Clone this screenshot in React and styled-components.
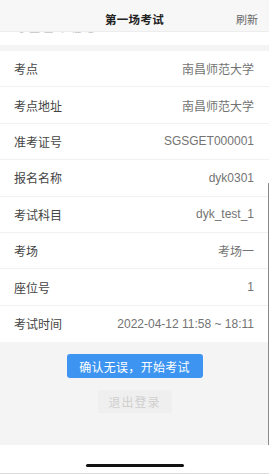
import React from "react";
import styled, { createGlobalStyle } from "styled-components";

const Global = createGlobalStyle`
  html, body { margin: 0; padding: 0; background: #ffffff; }
  body { font-family: "Liberation Sans", "Noto Sans CJK SC", sans-serif; }
  * { box-sizing: border-box; }
`;

const Page = styled.div`
  position: relative;
  width: 269px;
  height: 474px;
  display: flex;
  flex-direction: column;
  background: #ffffff;
  overflow: hidden;
`;

const Header = styled.header`
  height: 32px;
  flex: none;
  display: grid;
  grid-template-columns: 1fr auto 1fr;
  align-items: center;
  background: #f7f7f7;
  border-bottom: 1px solid #ededed;
  padding: 0 11px 0 11px;
`;

const Title = styled.div`
  grid-column: 2;
  font-size: 11.5px;
  font-weight: 700;
  color: #222;
  letter-spacing: 0.3px;
  padding-top: 6px;
`;

const Refresh = styled.div`
  grid-column: 3;
  justify-self: end;
  font-size: 11px;
  color: #666;
  padding-top: 6px;
`;

const Peek = styled.div`
  height: 13px;
  flex: none;
  overflow: hidden;
  padding-left: 15px;
`;

const PeekText = styled.div`
  font-size: 11px;
  line-height: 12px;
  color: #c4c4c4;
  margin-top: -10px;
  letter-spacing: 3px;
`;

const Gap = styled.div`
  height: 6px;
  flex: none;
  background: #f4f4f4;
`;

const List = styled.div`
  flex: none;
  display: flex;
  flex-direction: column;
  background: #ffffff;
`;

const Row = styled.div`
  height: 36.4px;
  display: flex;
  align-items: center;
  justify-content: space-between;
  padding: 0 15px 0 14px;
  border-bottom: ${(p) => (p.$last ? "none" : "1px solid #f1f1f1")};
  font-size: 12px;
`;

const Label = styled.span`
  color: #444444;
`;

const Value = styled.span`
  color: #737373;
`;

const Actions = styled.div`
  flex: 1;
  display: flex;
  flex-direction: column;
  align-items: center;
  gap: 12px;
  padding-top: 12px;
  background: #f4f4f4;
`;

const PrimaryButton = styled.button`
  width: 136px;
  height: 24px;
  border: none;
  border-radius: 3px;
  background: #3d95f1;
  color: #ffffff;
  font-family: inherit;
  font-size: 12px;
  letter-spacing: 0.3px;
  padding: 0;
`;

const GhostButton = styled.button`
  width: 74px;
  height: 23px;
  border: none;
  border-radius: 2px;
  background: #efefef;
  color: #cfcfcf;
  font-family: inherit;
  font-size: 12px;
  letter-spacing: 1px;
  padding: 0;
`;

const Footer = styled.div`
  height: 29px;
  flex: none;
  display: flex;
  justify-content: center;
  align-items: flex-end;
  padding-bottom: 6px;
  background: #ffffff;
  border-bottom: 1px solid #dcdcdc;
`;

const HomeBar = styled.div`
  width: 98px;
  height: 3px;
  border-radius: 2px;
  background: #111;
`;

const ScrollIndicator = styled.div`
  position: absolute;
  right: 0;
  top: 183px;
  width: 1px;
  height: 262px;
  background: #8a8a8a;
`;

const rows = [
  ["考点", "南昌师范大学"],
  ["考点地址", "南昌师范大学"],
  ["准考证号", "SGSGET000001"],
  ["报名名称", "dyk0301"],
  ["考试科目", "dyk_test_1"],
  ["考场", "考场一"],
  ["座位号", "1"],
  ["考试时间", "2022-04-12 11:58 ~ 18:11"],
];

export default function App() {
  return (
    <>
      <Global />
      <Page>
        <Header>
          <Title>第一场考试</Title>
          <Refresh>刷新</Refresh>
        </Header>
        <Peek>
          <PeekText>考生基本信息</PeekText>
        </Peek>
        <Gap />
        <List>
          {rows.map(([k, v], i) => (
            <Row key={k} $last={i === rows.length - 1}>
              <Label>{k}</Label>
              <Value>{v}</Value>
            </Row>
          ))}
        </List>
        <Actions>
          <PrimaryButton>确认无误，开始考试</PrimaryButton>
          <GhostButton>退出登录</GhostButton>
        </Actions>
        <Footer>
          <HomeBar />
        </Footer>
        <ScrollIndicator />
      </Page>
    </>
  );
}
